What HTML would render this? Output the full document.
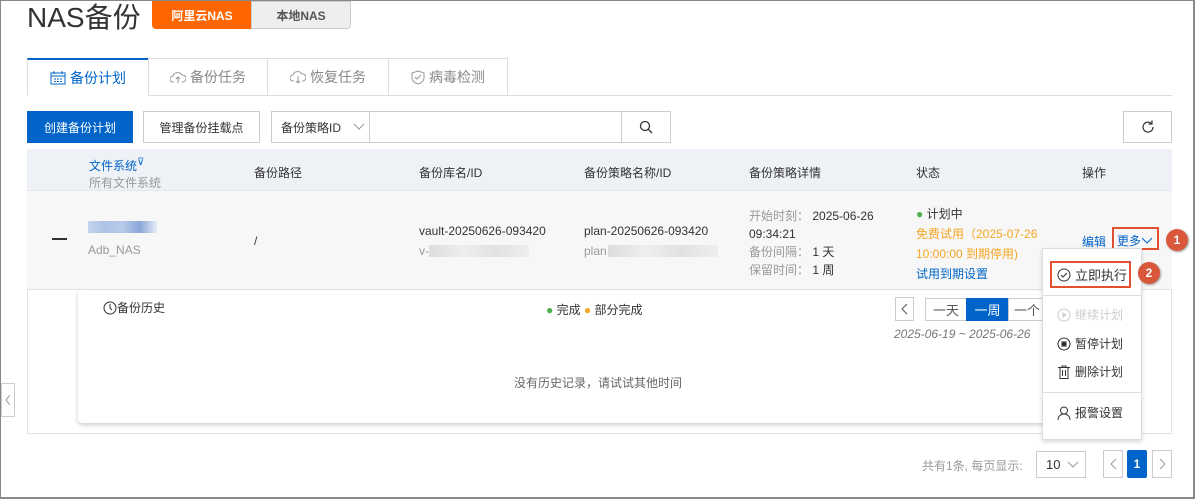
<!DOCTYPE html>
<html><head><meta charset="utf-8"><style>
*{box-sizing:border-box;margin:0;padding:0}
body{width:1195px;height:499px;position:relative;overflow:hidden;background:#fff;font-family:"Liberation Sans","Noto Sans CJK SC",sans-serif;font-size:12px;color:#333;border:1px solid #888;border-right:2px solid #888;border-bottom:2px solid #888}
.a{position:absolute;white-space:nowrap}
.btn{position:absolute;border:1px solid #ccc;background:#fff;display:flex;align-items:center;justify-content:center;font-size:12px;color:#333;white-space:nowrap}
.tab{position:absolute;top:57px;height:38px;border:1px solid #ddd;background:#fff;display:flex;align-items:center;justify-content:center;font-size:14px;color:#888;gap:4px}
.gray{color:#999}
.blue{color:#0064c8}
.blur{background:linear-gradient(90deg,#ddd,#eee,#e2e2e2,#eee);height:12px}
</style></head><body>
<div class="a" style="left:26px;top:-5px;font-size:28px;color:#333">NAS备份</div>
<div class="a" style="left:151px;top:0;width:100px;height:28px;background:#f60;border-radius:0 0 0 4px;color:#fff;font-weight:bold;font-size:12px;display:flex;align-items:center;justify-content:center">阿里云NAS</div>
<div class="a" style="left:250px;top:0;width:100px;height:28px;background:#eee;border:1px solid #ccc;border-radius:0 0 4px 0;color:#555;font-weight:bold;font-size:12px;display:flex;align-items:center;justify-content:center">本地NAS</div>

<div class="a" style="left:26px;top:94px;width:1145px;border-top:1px solid #ddd"></div>
<div class="tab" style="left:26px;width:122px;border-top:2px solid #0064c8;border-bottom-color:#fff;color:#0064c8">
<svg width="16" height="14" viewBox="0 0 16 14"><rect x="1" y="2" width="14" height="11" fill="none" stroke="#0064c8"/><path d="M1 5h14M4 0v3M12 0v3M4 8h2M7 8h2M10 8h2M4 10.5h2M7 10.5h2M10 10.5h2" stroke="#0064c8"/></svg>备份计划</div>
<div class="tab" style="left:147px;width:120px"><svg width="16" height="14" viewBox="0 0 16 14"><path d="M4 12H3a3 3 0 010-6 5 5 0 019-1 3.5 3.5 0 011 7h-1M8 13V7M6 9l2-2 2 2" fill="none" stroke="#999"/></svg>备份任务</div>
<div class="tab" style="left:266px;width:122px"><svg width="16" height="14" viewBox="0 0 16 14"><path d="M4 11H3a3 3 0 010-6 5 5 0 019-1 3.5 3.5 0 011 7h-1M8 6v7M6 11l2 2 2-2" fill="none" stroke="#999"/></svg>恢复任务</div>
<div class="tab" style="left:387px;width:120px"><svg width="14" height="15" viewBox="0 0 14 15"><path d="M7 1l6 2v5c0 3-3 5-6 6-3-1-6-3-6-6V3z M4 7l2 2 4-4" fill="none" stroke="#999"/></svg>病毒检测</div>

<div class="a" style="left:26px;top:110px;width:106px;height:32px;background:#0064c8;color:#fff;display:flex;align-items:center;justify-content:center">创建备份计划</div>
<div class="btn" style="left:142px;top:110px;width:117px;height:32px">管理备份挂载点</div>
<div class="btn" style="left:270px;top:110px;width:99px;height:32px;justify-content:flex-start;padding-left:9px">备份策略ID<svg style="margin-left:12px" width="12" height="8" viewBox="0 0 12 8"><path d="M1 1l5 5 5-5" fill="none" stroke="#999"/></svg></div>
<div class="btn" style="left:368px;top:110px;width:253px;height:32px"></div>
<div class="btn" style="left:620px;top:110px;width:50px;height:32px"><svg width="14" height="14" viewBox="0 0 14 14"><circle cx="6" cy="6" r="4.5" fill="none" stroke="#333" stroke-width="1.3"/><path d="M9.5 9.5L13 13" stroke="#333" stroke-width="1.3"/></svg></div>
<div class="btn" style="left:1122px;top:110px;width:49px;height:32px"><svg width="16" height="16" viewBox="0 0 16 16"><path d="M13 8a5 5 0 11-1.5-3.5M12 1.5v3.5H8.5" fill="none" stroke="#333" stroke-width="1.2"/></svg></div>

<div class="a" style="left:26px;top:148px;width:1145px;height:42px;background:#eef1f6;border-bottom:1px solid #e4e6ea"></div>
<div class="a blue" style="left:88px;top:156px">文件系统<span style="font-size:10px;vertical-align:top">⊽</span></div>
<div class="a gray" style="left:88px;top:173px">所有文件系统</div>
<div class="a" style="left:253px;top:163px">备份路径</div>
<div class="a" style="left:418px;top:163px">备份库名/ID</div>
<div class="a" style="left:583px;top:163px">备份策略名称/ID</div>
<div class="a" style="left:748px;top:163px">备份策略详情</div>
<div class="a" style="left:915px;top:163px">状态</div>
<div class="a" style="left:1081px;top:163px">操作</div>

<div class="a" style="left:26px;top:190px;width:1145px;height:99px;background:#f7f7f7;border-bottom:1px solid #e4e4e4"></div>
<div class="a" style="left:51px;top:237px;width:15px;height:2px;background:#333"></div>
<div class="a" style="left:87px;top:220px;width:69px;height:12px;background:linear-gradient(90deg,#c4d3ec,#adc3e6,#b8cbea,#8aa6d8,#e5ecf7)"></div>
<div class="a gray" style="left:87px;top:242px">Adb_NAS</div>
<div class="a" style="left:253px;top:233px">/</div>
<div class="a" style="left:418px;top:223px">vault-20250626-093420</div>
<div class="a gray" style="left:418px;top:243px">v-</div>
<div class="a blur" style="left:428px;top:244px;width:100px"></div>
<div class="a" style="left:583px;top:223px">plan-20250626-093420</div>
<div class="a gray" style="left:583px;top:243px">plan</div>
<div class="a blur" style="left:607px;top:244px;width:110px"></div>
<div class="a" style="left:748px;top:206px;line-height:18px"><span class="gray">开始时刻：</span> 2025-06-26<br>09:34:21<br><span class="gray">备份间隔：</span> 1 天<br><span class="gray">保留时间：</span> 1 周</div>
<div class="a" style="left:915px;top:203px;line-height:20px"><span style="color:#4caf50">●</span> 计划中<br><span style="color:#f5a623">免费试用（2025-07-26<br>10:00:00 到期停用)</span><br><span class="blue">试用到期设置</span></div>
<div class="a blue" style="left:1081px;top:232px">编辑</div>
<div class="a blue" style="left:1116px;top:231px;display:flex;align-items:center">更多<svg width="12" height="8" viewBox="0 0 12 8"><path d="M1 1l5 5 5-5" fill="none" stroke="#0064c8"/></svg></div>
<div class="a" style="left:1111px;top:226px;width:47px;height:23px;border:2px solid #e2502f"></div>
<div class="a" style="left:1165px;top:228px;width:22px;height:22px;border-radius:50%;background:#d9573a;color:#fff;font-weight:bold;display:flex;align-items:center;justify-content:center;box-shadow:1px 1px 2px #999">1</div>

<div class="a" style="left:26px;top:289px;width:1145px;height:144px;border:1px solid #e4e4e4;border-top:none"></div>
<div class="a" style="left:77px;top:290px;width:990px;height:132px;background:#fff;box-shadow:0 2px 4px rgba(0,0,0,.2);border-radius:0 0 4px 4px"></div>
<div class="a" style="left:102px;top:298px;display:flex;align-items:center"><svg width="14" height="14" viewBox="0 0 14 14"><circle cx="7" cy="7" r="6" fill="none" stroke="#333"/><path d="M7 3v4l2 2" fill="none" stroke="#333"/></svg>备份历史</div>
<div class="a" style="left:545px;top:300px"><span style="color:#4caf50">●</span> 完成 <span style="color:#f5a623">●</span> 部分完成</div>
<div class="btn" style="left:894px;top:296px;width:19px;height:24px"><svg width="7" height="12" viewBox="0 0 7 12"><path d="M6 1L1 6l5 5" fill="none" stroke="#555"/></svg></div>
<div class="btn" style="left:924px;top:297px;width:42px;height:23px;font-size:13px;color:#555">一天</div>
<div class="a" style="left:965px;top:297px;width:43px;height:23px;background:#0064c8;color:#fff;font-size:13px;display:flex;align-items:center;justify-content:center">一周</div>
<div class="btn" style="left:1007px;top:297px;width:40px;height:23px;font-size:13px;color:#555;justify-content:flex-start;padding-left:5px">一个</div>
<div class="a" style="left:893px;top:326px;color:#777;font-style:italic">2025-06-19 ~ 2025-06-26</div>
<div class="a" style="left:513px;top:373px;color:#666">没有历史记录，请试试其他时间</div>

<div class="a" style="left:1041px;top:247px;width:100px;height:192px;background:#fff;border:1px solid #ddd;box-shadow:0 2px 4px rgba(0,0,0,.15)"></div>
<div class="a" style="left:1041px;top:294px;width:100px;border-top:1px solid #ddd"></div>
<div class="a" style="left:1041px;top:391px;width:100px;border-top:1px solid #ddd"></div>
<div class="a" style="left:1049px;top:260px;width:81px;height:27px;border:2px solid #e2502f"></div>
<div class="a" style="left:1056px;top:264px;display:flex;align-items:center;gap:4px;font-size:13px"><svg width="14" height="14" viewBox="0 0 14 14"><circle cx="7" cy="7" r="6" fill="none" stroke="#333"/><path d="M4 7l2 2 4-4" fill="none" stroke="#333"/></svg>立即执行</div>
<div class="a" style="left:1137px;top:261px;width:22px;height:22px;border-radius:50%;background:#d9573a;color:#fff;font-weight:bold;display:flex;align-items:center;justify-content:center;box-shadow:1px 1px 2px #999">2</div>
<div class="a" style="left:1056px;top:305px;display:flex;align-items:center;gap:4px;color:#ccc"><svg width="14" height="14" viewBox="0 0 14 14"><circle cx="7" cy="7" r="6" fill="none" stroke="#ccc"/><path d="M5.5 4v6l4-3z" fill="#ccc"/></svg>继续计划</div>
<div class="a" style="left:1056px;top:334px;display:flex;align-items:center;gap:4px"><svg width="14" height="14" viewBox="0 0 14 14"><circle cx="7" cy="7" r="6" fill="none" stroke="#333"/><rect x="4.5" y="4.5" width="5" height="5" fill="#333"/></svg>暂停计划</div>
<div class="a" style="left:1056px;top:362px;display:flex;align-items:center;gap:4px"><svg width="14" height="14" viewBox="0 0 14 14"><path d="M1 2.5h12M5 2.5V1h4v1.5M3 2.5v11h8v-11M5.5 5v6M8.5 5v6" fill="none" stroke="#333"/></svg>删除计划</div>
<div class="a" style="left:1056px;top:403px;display:flex;align-items:center;gap:4px"><svg width="14" height="14" viewBox="0 0 14 14"><circle cx="7" cy="4.5" r="3.5" fill="none" stroke="#333"/><path d="M1 14c0-4 3-6 6-6s6 2 6 6" fill="none" stroke="#333"/></svg>报警设置</div>

<div class="a" style="left:0;top:382px;width:14px;height:34px;border:1px solid #ccc;background:#fff;display:flex;align-items:center;justify-content:center"><svg width="6" height="12" viewBox="0 0 6 12"><path d="M5 1L1 6l4 5" fill="none" stroke="#999"/></svg></div>

<div class="a gray" style="left:921px;top:456px">共有1条, 每页显示:</div>
<div class="btn" style="left:1035px;top:450px;width:50px;height:27px;justify-content:flex-start;padding-left:9px;font-size:13px">10<svg style="margin-left:7px" width="12" height="8" viewBox="0 0 12 8"><path d="M1 1l5 5 5-5" fill="none" stroke="#999"/></svg></div>
<div class="btn" style="left:1102px;top:449px;width:20px;height:28px"><svg width="7" height="12" viewBox="0 0 7 12"><path d="M6 1L1 6l5 5" fill="none" stroke="#999"/></svg></div>
<div class="a" style="left:1126px;top:449px;width:20px;height:28px;background:#0064c8;color:#fff;border-radius:2px;display:flex;align-items:center;justify-content:center;font-weight:bold">1</div>
<div class="btn" style="left:1151px;top:449px;width:20px;height:28px"><svg width="7" height="12" viewBox="0 0 7 12"><path d="M1 1l5 5-5 5" fill="none" stroke="#999"/></svg></div>
</body></html>
